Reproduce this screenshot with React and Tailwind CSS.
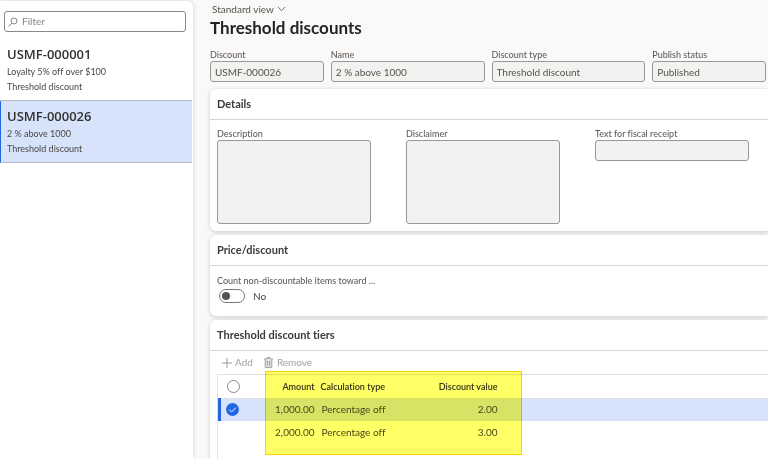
import { useState } from "react";

const discounts = [
  { id: "USMF-000001", name: "Loyalty 5% off over $100", type: "Threshold discount" },
  { id: "USMF-000026", name: "2 % above 1000", type: "Threshold discount" },
];

const tiers = [
  { amount: "1,000.00", type: "Percentage off", value: "2.00" },
  { amount: "2,000.00", type: "Percentage off", value: "3.00" },
];

function Field({ id, label, value, className }) {
  return (
    <div className={className}>
      <label htmlFor={id} className="block truncate text-[9px] leading-[13px] font-medium text-[#605e5c]">
        {label}
      </label>
      <input
        id={id}
        readOnly
        defaultValue={value}
        className="block h-[21px] w-full rounded-[3px] border border-[#9a9896] bg-[#f3f2f1] px-1 text-[10px] text-[#55534f] outline-none"
      />
    </div>
  );
}

function Area({ id, label }) {
  return (
    <div className="w-[154px] shrink-0">
      <label htmlFor={id} className="block text-[9px] leading-[13px] font-medium text-[#605e5c]">
        {label}
      </label>
      <textarea
        id={id}
        readOnly
        className="block h-[84px] w-full resize-none rounded-[3px] border border-[#9a9896] bg-[#f3f2f1] p-1 text-[10px] outline-none"
      />
    </div>
  );
}

function Card({ title, children, last }) {
  return (
    <section
      className={
        last
          ? "flex grow flex-col rounded-tl-md bg-white shadow-[0_1px_4px_rgba(0,0,0,0.2)]"
          : "mb-1 rounded-l-md bg-white shadow-[0_1px_4px_rgba(0,0,0,0.2)]"
      }
    >
      <h2 className="flex h-[31px] items-center border-b border-[#d6d6d6] px-[7px] text-[11px] font-bold text-[#3b3a39]">
        {title}
      </h2>
      {children}
    </section>
  );
}

export default function App() {
  const [selected, setSelected] = useState("USMF-000026");
  const [count, setCount] = useState(false);

  return (
    <div className="flex h-screen flex-col overflow-hidden bg-white font-['Lato','Open_Sans',sans-serif] [font-variant-ligatures:none]">
      <div className="flex min-h-0 grow bg-[#faf9f8]">
        <aside className="mt-px w-[193px] shrink-0 rounded-tr-md bg-white shadow-[0_0_5px_rgba(0,0,0,0.16)]">
          <div className="mt-[10px] mr-[7px] ml-1 flex h-[21px] items-center gap-1 rounded-[3px] border border-[#8a8886] px-[3px]">
            <svg viewBox="0 0 10 10" className="size-[10px] shrink-0" fill="none" stroke="#7a7876" strokeWidth="0.9">
              <circle cx="6" cy="4" r="3" />
              <path d="M3.8 6.2 0.6 9.4" />
            </svg>
            <input
              aria-label="Filter"
              placeholder="Filter"
              className="w-full min-w-0 bg-transparent text-[10px] outline-none placeholder:text-[#8a8886]"
            />
          </div>
          <div className="mt-[7px]">
            {discounts.map((d) => (
              <button
                key={d.id}
                type="button"
                onClick={() => setSelected(d.id)}
                className={
                  d.id === selected
                    ? "flex h-[62px] w-[192px] flex-col border-b border-l border-[#b4bccb] border-l-[#2266e3] bg-[#d7e3fb] pt-[7px] pl-[6px] text-left"
                    : "flex h-[62px] w-[192px] flex-col border-b border-l border-[#b4bccb] border-l-transparent pt-[7px] pl-[6px] text-left"
                }
              >
                <span className="font-['Open_Sans',sans-serif] text-[13px] leading-4 font-semibold text-[#323130]">{d.id}</span>
                <span className="mt-[2px] text-[9px] leading-[15px] text-[#4a4845]">{d.name}</span>
                <span className="text-[9px] leading-[15px] text-[#4a4845]">{d.type}</span>
              </button>
            ))}
          </div>
        </aside>

        <main className="flex min-w-0 grow flex-col pl-[17px]">
          <button type="button" className="mt-[3px] ml-[2px] flex h-3 items-center gap-[3px] self-start text-[10px] text-[#55534f]">
            Standard view
            <svg viewBox="0 0 10 6" className="h-[6px] w-[9px]" fill="none" stroke="#605e5c" strokeWidth="1">
              <path d="M1 0.8 5 4.8 9 0.8" />
            </svg>
          </button>
          <h1 className="mt-[2px] text-[17px] leading-[22px] font-bold text-[#252423]">Threshold discounts</h1>

          <div className="mt-[9px] mb-[7px] flex gap-[7px] pr-[2px]">
            <Field id="discount" label="Discount" value="USMF-000026" className="min-w-0 flex-[114]" />
            <Field id="name" label="Name" value="2 % above 1000" className="min-w-0 flex-[154]" />
            <Field id="type" label="Discount type" value="Threshold discount" className="min-w-0 flex-[154]" />
            <Field id="status" label="Publish status" value="Published" className="min-w-0 flex-[114]" />
          </div>

          <Card title="Details">
            <div className="flex gap-[35px] px-[7px] pt-[7px] pb-[7px]">
              <Area id="description" label="Description" />
              <Area id="disclaimer" label="Disclaimer" />
              <Field id="receipt" label="Text for fiscal receipt" value="" className="w-[154px] shrink-0" />
            </div>
          </Card>

          <Card title="Price/discount">
            <div className="px-[7px] pt-2 pb-[13px]">
              <label htmlFor="count" className="block text-[9px] leading-[13px] font-medium text-[#605e5c]">
                Count non-discountable items toward ...
              </label>
              <div className="mt-[2px] flex h-[14px] items-center gap-2 pl-[2px]">
                <input
                  id="count"
                  type="checkbox"
                  role="switch"
                  checked={count}
                  onChange={() => setCount(!count)}
                  className="h-[14px] w-[26px] appearance-none rounded-full border border-[#7a7876] bg-white before:mt-[2px] before:ml-[2px] before:block before:size-2 before:rounded-full before:bg-[#55534f] checked:before:ml-[14px]"
                />
                <span className="text-[10px] text-[#4a4845]">{count ? "Yes" : "No"}</span>
              </div>
            </div>
          </Card>

          <Card title="Threshold discount tiers" last>
            <div className="flex h-[23px] items-center gap-[11px] pl-[12px] text-[10px] text-[#a19f9d]">
              <button type="button" className="flex items-center gap-[3px]">
                <svg viewBox="0 0 10 10" className="size-[10px]" fill="none" stroke="#a19f9d">
                  <path d="M5 0v10M0 5h10" />
                </svg>
                Add
              </button>
              <button type="button" className="flex items-center gap-1">
                <svg viewBox="0 0 9 11" className="h-[11px] w-[9px]" fill="none" stroke="#a19f9d">
                  <path d="M0 2h9M3 2V0.6h3V2" />
                  <path d="M1.2 2v8.4h6.6V2" fill="#e4e2e0" />
                  <path d="M3.4 4v4.6M5.6 4v4.6" />
                </svg>
                Remove
              </button>
            </div>
            <div className="relative ml-[7px] grow border-t border-l border-[#e1dfdd]">
              <table className="w-full table-fixed text-[10px] text-[#4a4845]">
                <colgroup>
                  <col className="w-[34px]" />
                  <col className="w-[61px]" />
                  <col className="w-[98px]" />
                  <col className="w-[85px]" />
                  <col />
                </colgroup>
                <thead>
                  <tr className="h-[23px] border-b border-[#e1dfdd] text-[9px] text-[#323130]">
                    <th className="p-0 pl-[7px]">
                      <input
                        type="checkbox"
                        aria-label="Select all"
                        className="block size-[13px] appearance-none rounded-full border border-[#8a8886]"
                      />
                    </th>
                    <th className="p-0 text-right font-semibold">Amount</th>
                    <th className="p-0 pl-[6px] text-left font-semibold">Calculation type</th>
                    <th className="p-0 text-right font-semibold">Discount value</th>
                    <th className="p-0" />
                  </tr>
                </thead>
                <tbody>
                  {tiers.map((t, i) => (
                    <tr key={t.amount} className={i === 0 ? "h-[23px] bg-[#d7e3fb]" : "h-[23px]"}>
                      <td className={i === 0 ? "border-l-3 border-[#2266e3] p-0 pl-[5px]" : "p-0"}>
                        {i === 0 && (
                          <span className="relative block size-[13px]">
                            <input
                              type="checkbox"
                              aria-label="Select row"
                              defaultChecked
                              className="block size-[13px] appearance-none rounded-full bg-[#2266e3]"
                            />
                            <svg viewBox="0 0 13 13" className="pointer-events-none absolute inset-0" fill="none" stroke="#fff">
                              <path d="M3.3 6.6 5.6 8.9 9.8 4.7" />
                            </svg>
                          </span>
                        )}
                      </td>
                      <td className="p-0 text-right">{t.amount}</td>
                      <td className="p-0 pl-[7px]">{t.type}</td>
                      <td className="p-0 text-right">{t.value}</td>
                      <td className="p-0" />
                    </tr>
                  ))}
                </tbody>
              </table>
              <div className="pointer-events-none absolute -top-1 left-[47px] h-[84px] w-[257px] border border-[#ffcc00] bg-[#ffff66] mix-blend-multiply" />
            </div>
          </Card>
        </main>
      </div>
      <div className="h-[6px] shrink-0 bg-white" />
    </div>
  );
}
